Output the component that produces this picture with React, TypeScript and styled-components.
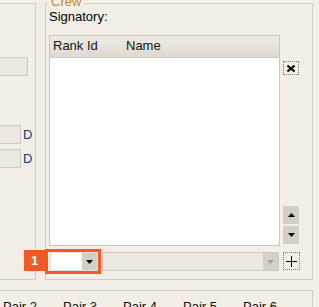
import React from 'react';
import styled, { createGlobalStyle } from 'styled-components';

const Global = createGlobalStyle`
  html, body { margin: 0; padding: 0; background: #f3efe6; }
  body {
    font-family: "Liberation Sans", Arial, sans-serif;
    font-size: 13px;
    color: #000;
  }
  * { box-sizing: border-box; }
`;

const LINE = '#d0ccc3';

const Screen = styled.div`
  width: 319px;
  height: 307px;
  overflow: hidden;
  background: #f3efe6;
  display: flex;
  flex-direction: column;
`;

const Main = styled.div`
  display: flex;
  gap: 9px;
  padding-top: 3px;
`;

const LeftPanel = styled.div`
  width: 36px;
  height: 277px;
  border-top: 1px solid ${LINE};
  border-bottom: 1px solid ${LINE};
  border-right: 1px solid ${LINE};
  display: flex;
  flex-direction: column;
`;

const FieldRow = styled.div<{ $top: number }>`
  display: flex;
  align-items: center;
  gap: 2px;
  margin-top: ${p => p.$top}px;
  height: 19px;
`;

const StubInput = styled.div<{ $w: number }>`
  width: ${p => p.$w}px;
  height: 19px;
  background: #ebe8df;
  border: 1px solid #cdc9bf;
  border-left: none;
`;

const Flag = styled.span`
  color: #0c3a84;
  line-height: 15px;
`;

const Group = styled.div`
  position: relative;
  width: 268px;
  height: 277px;
  border: 1px solid ${LINE};
  padding: 5px 0 0 3px;
  display: flex;
  flex-direction: column;
`;

const Legend = styled.span`
  position: absolute;
  left: 2px;
  top: -10px;
  padding: 0 3px;
  background: #f3efe6;
  color: #c0873a;
  line-height: 15px;
`;

const Label = styled.div`
  line-height: 15px;
`;

const ListRow = styled.div`
  display: flex;
  gap: 3px;
  margin-top: 11px;
`;

const List = styled.div`
  width: 231px;
  height: 211px;
  border: 1px solid #c9c5bc;
  background: #fff;
  display: flex;
  flex-direction: column;
`;

const Header = styled.div`
  height: 22px;
  border-bottom: 1px solid #cfcbc2;
  background: linear-gradient(#eeebe5, #dedad2);
  display: flex;
  padding: 2px 0 0 3px;
`;

const HeaderCell = styled.div<{ $w?: number }>`
  width: ${p => (p.$w ? `${p.$w}px` : 'auto')};
  line-height: 15px;
  color: #1a1410;
`;

const SideColumn = styled.div`
  width: 16px;
  display: flex;
  flex-direction: column;
  padding-top: 26px;
  padding-bottom: 2px;
`;

const Spacer = styled.div`
  flex: 1;
`;

const DottedButton = styled.div<{ $h: number; $w: number }>`
  width: ${p => p.$w}px;
  height: ${p => p.$h}px;
  border: 1px dotted #7d7a74;
  background: #f3efe6;
  display: flex;
  align-items: center;
  justify-content: center;
`;

const ArrowButton = styled.div`
  width: 16px;
  height: 18px;
  background: #d4d0c8;
  display: flex;
  align-items: center;
  justify-content: center;
  & + & { margin-top: 2px; }
`;

const BottomRow = styled.div`
  display: flex;
  gap: 4px;
  margin-top: 6px;
  align-items: flex-start;
`;

const Highlighted = styled.div`
  position: relative;
  margin-left: 1px;
`;

const Outline = styled.div`
  position: absolute;
  left: -5px;
  top: -3px;
  right: -3px;
  bottom: -3px;
  border: 3px solid #f15a24;
  pointer-events: none;
`;

const Badge = styled.div`
  position: absolute;
  left: -26px;
  top: -2px;
  width: 21px;
  height: 21px;
  background: #f15a24;
  color: #fff;
  font-weight: bold;
  font-size: 13px;
  line-height: 21px;
  text-align: center;
`;

const Combo = styled.div<{ $w: number; $disabled?: boolean }>`
  width: ${p => p.$w}px;
  height: 19px;
  display: flex;
  background: ${p => (p.$disabled ? '#ebe8df' : '#fff')};
  border: 1px solid ${p => (p.$disabled ? '#cdc9bf' : '#e2dfd8')};
`;

const ComboText = styled.div`
  flex: 1;
`;

const ComboButton = styled.div`
  width: 15px;
  background: #d4d0c8;
  display: flex;
  align-items: center;
  justify-content: center;
`;

const TabStrip = styled.div`
  margin-top: 10px;
  width: 313px;
  border-top: 1px solid ${LINE};
  border-right: 1px solid ${LINE};
  display: flex;
  padding: 8px 0 0 3px;
  height: 30px;
`;

const Tab = styled.div`
  width: 60px;
  line-height: 15px;
  color: #111;
`;

const Tri = ({ up, color = '#000' }: { up?: boolean; color?: string }) => (
  <svg width="7" height="4" viewBox="0 0 7 4">
    <path d={up ? 'M3.5 0 L7 4 L0 4 Z' : 'M0 0 L7 0 L3.5 4 Z'} fill={color} />
  </svg>
);

const CloseIcon = () => (
  <svg width="8" height="7" viewBox="0 0 8 7">
    <path d="M0.5 0.5 L7.5 6.5 M7.5 0.5 L0.5 6.5" stroke="#000" strokeWidth="2" />
  </svg>
);

const PlusIcon = () => (
  <svg width="11" height="11" viewBox="0 0 11 11">
    <path d="M5.5 0 V11 M0 5.5 H11" stroke="#000" strokeWidth="1" />
  </svg>
);

export default function App() {
  return (
    <>
      <Global />
      <Screen>
        <Main>
          <LeftPanel>
            <FieldRow $top={53}>
              <StubInput $w={28} />
            </FieldRow>
            <FieldRow $top={49}>
              <StubInput $w={21} />
              <Flag>D</Flag>
            </FieldRow>
            <FieldRow $top={5}>
              <StubInput $w={21} />
              <Flag>D</Flag>
            </FieldRow>
          </LeftPanel>
          <Group>
            <Legend>Crew</Legend>
            <Label>Signatory:</Label>
            <ListRow>
              <List>
                <Header>
                  <HeaderCell $w={73}>Rank Id</HeaderCell>
                  <HeaderCell>Name</HeaderCell>
                </Header>
              </List>
              <SideColumn>
                <DottedButton $w={16} $h={14}>
                  <CloseIcon />
                </DottedButton>
                <Spacer />
                <ArrowButton>
                  <Tri up />
                </ArrowButton>
                <ArrowButton>
                  <Tri />
                </ArrowButton>
              </SideColumn>
            </ListRow>
            <BottomRow>
              <Highlighted>
                <Combo $w={48}>
                  <ComboText />
                  <ComboButton>
                    <Tri />
                  </ComboButton>
                </Combo>
                <Outline />
                <Badge>1</Badge>
              </Highlighted>
              <Combo $w={177} $disabled>
                <ComboText />
                <ComboButton>
                  <Tri color="#a3a09a" />
                </ComboButton>
              </Combo>
              <DottedButton $w={17} $h={18}>
                <PlusIcon />
              </DottedButton>
            </BottomRow>
          </Group>
        </Main>
        <TabStrip>
          <Tab>Pair 2</Tab>
          <Tab>Pair 3</Tab>
          <Tab>Pair 4</Tab>
          <Tab>Pair 5</Tab>
          <Tab>Pair 6</Tab>
        </TabStrip>
      </Screen>
    </>
  );
}
